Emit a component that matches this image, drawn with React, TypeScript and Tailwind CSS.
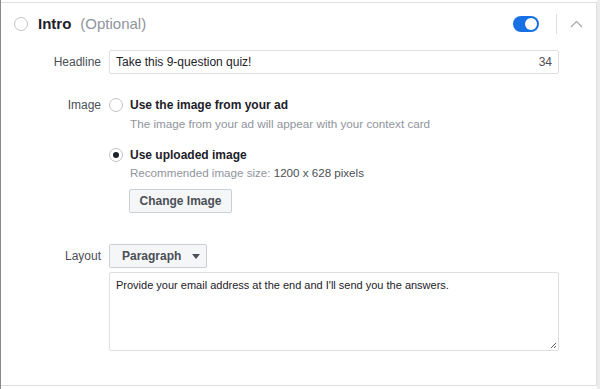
import React from 'react';

const Radio: React.FC<{ checked?: boolean }> = ({ checked }) => (
  <span className="flex h-[14px] w-[14px] shrink-0 items-center justify-center rounded-full border border-[#bec3c9] bg-white">
    {checked && <span className="h-[6px] w-[6px] rounded-full bg-[#1d2129]" />}
  </span>
);

const FieldRow: React.FC<{ label: string; children: React.ReactNode; className?: string }> = ({
  label,
  children,
  className,
}) => (
  <div className={`flex ${className ?? ''}`}>
    <div className="w-[100px] shrink-0 text-right text-[12px] leading-[24px] text-[#4b4f56]">{label}</div>
    <div className="ml-[8px] flex-1">{children}</div>
  </div>
);

export default function App() {
  return (
    <div
      className="flex h-[389px] w-[600px] bg-white text-[#1d2129]"
      style={{ fontFamily: '"Liberation Sans", Helvetica, Arial, sans-serif' }}
    >
      <div className="w-px shrink-0 bg-[#8a8a8a]" />
      <div className="flex flex-col">
        <div className="mt-[2px] h-[384px] w-[596px] border-t border-r border-b border-[#dddfe2]">
          {/* header */}
          <div className="flex h-[42px] items-center pl-[13px] pr-[13px]">
            <Radio />
            <span className="ml-[10px] text-[15px] font-bold">Intro</span>
            <span className="ml-[9px] text-[15px] text-[#90949c]">(Optional)</span>
            <div className="flex-1" />
            <span className="relative h-[16px] w-[26px] rounded-full bg-[#1870e5]">
              <span className="absolute right-[2px] top-[2px] h-[12px] w-[12px] rounded-full bg-white" />
            </span>
            <span className="ml-[17px] h-[20px] w-px bg-[#dddfe2]" />
            <svg className="ml-[13px]" width="13" height="8" viewBox="0 0 13 8" fill="none">
              <path d="M1 7L6.5 1.5L12 7" stroke="#a0a4aa" strokeWidth="1.1" />
            </svg>
          </div>

          <FieldRow label="Headline" className="mt-[5px]">
            <div className="flex h-[24px] w-[450px] items-center justify-between rounded-[2px] border border-[#dddfe2] px-[6px] text-[12px]">
              <span>Take this 9-question quiz!</span>
              <span className="text-[#4b4f56]">34</span>
            </div>
          </FieldRow>

          <FieldRow label="Image" className="mt-[19px]">
            <div className="flex items-center pt-[4px]">
              <Radio />
              <span className="ml-[7px] text-[12px] font-bold leading-[16px]">Use the image from your ad</span>
            </div>
            <div className="ml-[21px] mt-[3px] text-[11.7px] leading-[16px] text-[#90949c]">
              The image from your ad will appear with your context card
            </div>
            <div className="mt-[15px] flex items-center">
              <Radio checked />
              <span className="ml-[7px] text-[12px] font-bold leading-[16px]">Use uploaded image</span>
            </div>
            <div className="ml-[21px] mt-[2px] text-[11.6px] leading-[16px] text-[#90949c]">
              Recommended image size: <span className="text-[#4b4f56]">1200 x 628 pixels</span>
            </div>
            <button className="ml-[20px] mt-[8px] h-[24px] w-[103px] rounded-[2px] border border-[#ccd0d5] bg-[#f5f6f7] text-[12px] font-bold text-[#4b4f56]">
              Change Image
            </button>
          </FieldRow>

          <FieldRow label="Layout" className="mt-[31px]">
            <button className="flex h-[24px] w-[98px] items-center rounded-[2px] border border-[#ccd0d5] bg-[#f5f6f7] pl-[12px] text-[12px] font-bold text-[#4b4f56]">
              Paragraph
              <svg className="ml-[11px]" width="8" height="5" viewBox="0 0 8 5">
                <path d="M0 0H8L4 5Z" fill="#4b4f56" />
              </svg>
            </button>
            <div className="relative mt-[4px] h-[79px] w-[450px] rounded-[2px] border border-[#dddfe2] px-[6px] pt-[4px] text-[11px] leading-[16px]">
              Provide your email address at the end and I'll send you the answers.
              <svg className="absolute bottom-[1px] right-[1px]" width="7" height="7" viewBox="0 0 7 7">
                <path d="M1 6L6 1M4 6L6 4" stroke="#4b4f56" strokeWidth="0.9" />
              </svg>
            </div>
          </FieldRow>
        </div>
      </div>
      <div className="flex-1 bg-[#ececec]" />
    </div>
  );
}
